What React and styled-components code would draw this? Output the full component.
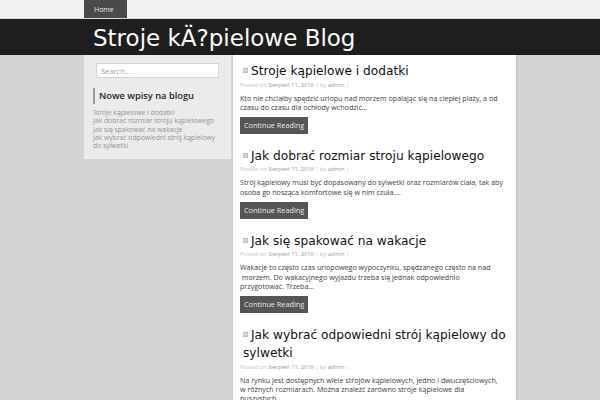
import React from "react";
import styled, { createGlobalStyle } from "styled-components";

const posts = [
  {
    title: "Stroje kąpielowe i dodatki",
    excerpt:
      "Kto nie chciałby spędzić urlopu nad morzem opalając się na ciepłej plaży, a od\nczasu do czasu dla ochłody wchodzić…",
  },
  {
    title: "Jak dobrać rozmiar stroju kąpielowego",
    excerpt:
      "Strój kąpielowy musi być dopasowany do sylwetki oraz rozmiarów ciała, tak aby\nosoba go nosząca komfortowe się w nim czuła.…",
  },
  {
    title: "Jak się spakować na wakacje",
    excerpt:
      "Wakacje to często czas urlopowego wypoczynku, spędzanego często na nad\n\u00a0morzem. Do wakacyjnego wyjazdu trzeba się jednak odpowiednio\nprzygotować. Trzeba…",
  },
  {
    title: "Jak wybrać odpowiedni strój kąpielowy do sylwetki",
    excerpt:
      "Na rynku jest dostępnych wiele strojów kąpielowych, jedno i dwuczęściowych,\nw różnych rozmiarach. Można znaleźć zarówno stroje kąpielowe dla\npuszystych,…",
  },
];

const recent = [
  "Stroje kąpielowe i dodatki",
  "Jak dobrać rozmiar stroju kąpielowego",
  "Jak się spakować na wakacje",
  "Jak wybrać odpowiedni strój kąpielowy do sylwetki",
];

export default function App() {
  return (
    <>
      <GlobalStyle />
      <TopNav>
        <Inner>
          <NavItem href="#">Home</NavItem>
        </Inner>
      </TopNav>
      <Header>
        <Inner>
          <SiteTitle>Stroje kÄ?pielowe Blog</SiteTitle>
        </Inner>
      </Header>
      <Main>
        <Sidebar>
          <Search placeholder="Search..." />
          <WidgetTitle>Nowe wpisy na blogu</WidgetTitle>
          <RecentList>
            {recent.map((r) => (
              <li key={r}>
                <a href="#">{r}</a>
              </li>
            ))}
          </RecentList>
        </Sidebar>
        <Content>
          {posts.map((p) => (
            <Post key={p.title}>
              <PostTitle>
                <PostIcon viewBox="0 0 6 6">
                  <rect x="0" y="0" width="6" height="6" fill="#bdbdbd" />
                  <rect x="1" y="1.5" width="4" height="0.7" fill="#f4f4f4" />
                  <rect x="1" y="3" width="4" height="0.7" fill="#f4f4f4" />
                  <rect x="1" y="4.3" width="3" height="0.6" fill="#f4f4f4" />
                </PostIcon>
                {p.title}
              </PostTitle>
              <Meta>
                Posted on <a href="#">Sierpień 11, 2016</a> | by <a href="#">admin</a> |
              </Meta>
              <Excerpt>{p.excerpt}</Excerpt>
              <ReadMore href="#">Continue Reading</ReadMore>
            </Post>
          ))}
        </Content>
      </Main>
    </>
  );
}

const GlobalStyle = createGlobalStyle`
  html, body {
    margin: 0;
    padding: 0;
    background: #d4d4d4;
    font-family: "Open Sans", "DejaVu Sans", sans-serif;
  }
`;

const Inner = styled.div`
  width: 432px;
  margin: 0 auto;
  display: flex;
  align-items: center;
`;

const TopNav = styled.nav`
  height: 18px;
  background: #f2f2f2;
  border-bottom: 1px solid #d8d8d8;
  ${Inner} {
    height: 18px;
    align-items: stretch;
  }
`;

const NavItem = styled.a`
  display: flex;
  align-items: center;
  padding: 0 10px;
  width: 43px;
  box-sizing: border-box;
  background: #4a4a4a;
  color: #e6e6e6;
  font-size: 7px;
  text-decoration: none;
`;

const Header = styled.header`
  height: 36px;
  background: #1e1e1e;
`;

const SiteTitle = styled.h1`
  margin: 0;
  padding: 2px 0 0 9px;
  height: 34px;
  font-family: "DejaVu Sans", sans-serif;
  font-weight: normal;
  font-size: 23px;
  line-height: 34px;
  color: #fafafa;
`;

const Main = styled.div`
  width: 432px;
  margin: 0 auto;
  display: flex;
  align-items: flex-start;
  gap: 2px;
`;

const Sidebar = styled.aside`
  width: 147px;
  box-sizing: border-box;
  background: #ebebeb;
  padding: 8px 9px 9px 9px;
`;

const Search = styled.input`
  display: block;
  box-sizing: border-box;
  width: 123px;
  height: 15px;
  margin: 0 0 0 3px;
  padding: 0 4px;
  border: 1px solid #d6d6d6;
  background: #fff;
  font-family: "Open Sans", sans-serif;
  font-size: 7.5px;
  &::placeholder {
    color: #a0a0a0;
  }
`;

const WidgetTitle = styled.h3`
  margin: 10px 0 5px 0;
  padding-left: 4px;
  border-left: 2.5px solid #9a9a9a;
  font-family: "Open Sans", sans-serif;
  font-weight: 600;
  font-size: 9.3px;
  line-height: 16px;
  color: #1e1e1e;
`;

const RecentList = styled.ul`
  list-style: none;
  margin: 0;
  padding: 0;
  li {
    font-size: 6.8px;
    line-height: 8.3px;
  }
  a {
    color: #959595;
    text-decoration: none;
  }
`;

const Content = styled.main`
  width: 283px;
  box-sizing: border-box;
  background: #fff;
  padding: 7px 4px 0 7px;
  box-shadow: 1px 0 2px rgba(0, 0, 0, 0.08);
  min-height: 345px;
`;

const Post = styled.article`
  margin-bottom: 13px;
`;

const PostTitle = styled.h2`
  margin: 0 2px 0 0;
  padding-left: 3px;
  font-family: "DejaVu Sans", sans-serif;
  font-weight: normal;
  font-size: 12.2px;
  line-height: 18.5px;
  color: #111;
`;

const PostIcon = styled.svg`
  width: 5px;
  height: 5px;
  margin-right: 3px;
  vertical-align: 2px;
`;

const Meta = styled.div`
  margin-top: 0;
  font-size: 5.7px;
  line-height: 8px;
  color: #c4c4c4;
  a {
    color: #999;
    text-decoration: none;
  }
`;

const Excerpt = styled.p`
  margin: 5px 0 5px 0;
  font-size: 7.15px;
  line-height: 9.2px;
  color: #3c3c3c;
  white-space: pre-line;
`;

const ReadMore = styled.a`
  display: block;
  width: max-content;
  padding: 0 4px;
  height: 17px;
  line-height: 17px;
  background: #555;
  color: #e8e8e8;
  font-size: 7.3px;
  text-decoration: none;
`;
